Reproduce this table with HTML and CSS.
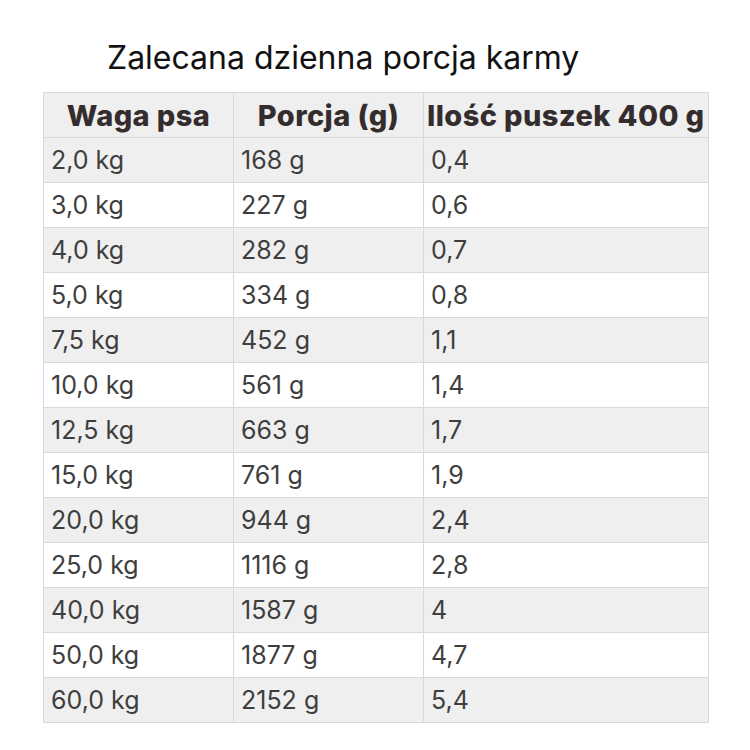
FILE: index.html
```html
<!DOCTYPE html>
<html lang="pl">
<head>
<meta charset="utf-8">
<link rel="stylesheet" href="styles.css">
</head>
<body>
<div class="page">
  <h1 class="title">Zalecana dzienna porcja karmy</h1>
  <table class="feed">
    <thead>
      <tr><th>Waga psa</th><th>Porcja (g)</th><th>Ilość puszek 400 g</th></tr>
    </thead>
    <tbody>
      <tr><td>2,0 kg</td><td>168 g</td><td>0,4</td></tr>
      <tr><td>3,0 kg</td><td>227 g</td><td>0,6</td></tr>
      <tr><td>4,0 kg</td><td>282 g</td><td>0,7</td></tr>
      <tr><td>5,0 kg</td><td>334 g</td><td>0,8</td></tr>
      <tr><td>7,5 kg</td><td>452 g</td><td>1,1</td></tr>
      <tr class="sel"><td>10,0 kg</td><td>561 g</td><td>1,4</td></tr>
      <tr><td>12,5 kg</td><td>663 g</td><td>1,7</td></tr>
      <tr><td>15,0 kg</td><td>761 g</td><td>1,9</td></tr>
      <tr><td>20,0 kg</td><td>944 g</td><td>2,4</td></tr>
      <tr><td>25,0 kg</td><td>1116 g</td><td>2,8</td></tr>
      <tr><td>40,0 kg</td><td>1587 g</td><td>4</td></tr>
      <tr><td>50,0 kg</td><td>1877 g</td><td>4,7</td></tr>
      <tr><td>60,0 kg</td><td>2152 g</td><td>5,4</td></tr>
    </tbody>
  </table>
</div>
</body>
</html>
```
FILE: styles.css
```css
html, body {
  margin: 0;
  padding: 0;
  background: #ffffff;
}
.page {
  width: 750px;
  height: 750px;
  padding-top: 38px;
  box-sizing: border-box;
  font-family: Inter, "Noto Sans", sans-serif;
}
.title {
  margin: 0 0 14px 107px;
  font-size: 32px;
  font-weight: 400;
  color: #111;
  line-height: 40px;
  letter-spacing: 0;
}
.feed {
  margin-left: 43px;
  border-collapse: collapse;
  table-layout: fixed;
  width: 666px;
}
.feed th, .feed td {
  border: 1px solid #d9d9d9;
  padding: 0 0 0 7px;
  height: 44px;
  overflow: visible;
  white-space: nowrap;
}
.feed th:nth-child(1), .feed td:nth-child(1) { width: 189px; }
.feed th:nth-child(2), .feed td:nth-child(2) { width: 189px; }
.feed th {
  background: #efefef;
  color: #352d2d;
  font-size: 29px;
  font-weight: 800;
  letter-spacing: 0.4px;
  text-align: center;
  padding: 0;
  height: 44px;
}
.feed th:nth-child(3) { text-align: left; padding-left: 3px; }
.feed td {
  font-size: 25px;
  color: #3e3e3e;
  font-weight: 400;
  text-align: left;
}
.feed tbody tr:nth-child(odd) td { background: #efefef; }
.feed tbody tr.sel td:first-child { border-left: 1px solid #c9d8f5; }
```
